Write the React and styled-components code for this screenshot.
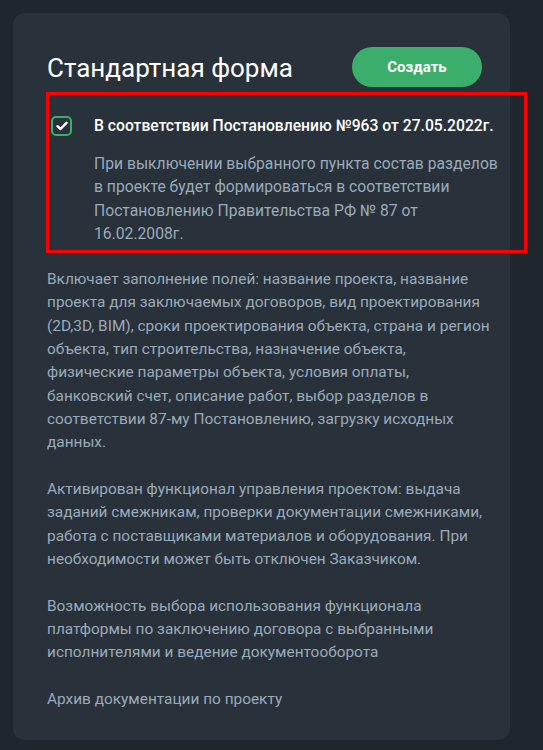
import styled, { createGlobalStyle } from 'styled-components';

const GlobalStyle = createGlobalStyle`
  html, body {
    margin: 0;
    padding: 0;
    background: #1f262d;
  }
  body {
    font-family: Roboto, "Noto Sans", "Liberation Sans", sans-serif;
  }
`;

// строки абзацев разбиты так же, как в макете
const paragraphs = [
  [
    'Включает заполнение полей: название проекта, название',
    'проекта для заключаемых договоров, вид проектирования',
    '(2D,3D, BIM), сроки проектирования объекта, страна и регион',
    'объекта, тип строительства, назначение объекта,',
    'физические параметры объекта, условия оплаты,',
    'банковский счет, описание работ, выбор разделов в',
    'соответствии 87-му Постановлению, загрузку исходных',
    'данных.',
  ],
  [
    'Активирован функционал управления проектом: выдача',
    'заданий смежникам, проверки документации смежниками,',
    'работа с поставщиками материалов и оборудования. При',
    'необходимости может быть отключен Заказчиком.',
  ],
  [
    'Возможность выбора использования функционала',
    'платформы по заключению договора с выбранными',
    'исполнителями и ведение документооборота',
  ],
  ['Архив документации по проекту'],
];

const App = () => {
  return (
    <Page>
      <GlobalStyle />
      <Card>
        <Header>
          <Title>Стандартная форма</Title>
          <CreateButton>Создать</CreateButton>
        </Header>

        {/* выделенный блок с чекбоксом */}
        <Highlight>
          <Checkbox>
            <svg width="12" height="10" viewBox="0 0 12 10">
              <path d="M1.5 5.2 L4.5 8 L10.5 1.8" fill="none" stroke="#fff" strokeWidth="2.4" strokeLinecap="round" strokeLinejoin="round" />
            </svg>
          </Checkbox>
          <OptionBody>
            <OptionTitle>В соответствии Постановлению №963 от 27.05.2022г.</OptionTitle>
            <OptionNote>
              При выключении выбранного пункта состав разделов в проекте будет формироваться в соответствии Постановлению Правительства РФ № 87 от 16.02.2008г.
            </OptionNote>
          </OptionBody>
        </Highlight>

        <Description>
          {paragraphs.map((lines, i) => (
            <Paragraph key={i}>
              {lines.map((line, j) => (
                <Line key={j}>{line}</Line>
              ))}
            </Paragraph>
          ))}
        </Description>
      </Card>
    </Page>
  );
};

export default App;

const Page = styled.div`
  padding: 13px 33px 8px 13px;
`;

const Card = styled.div`
  background: #29313b;
  border-radius: 12px;
  padding: 34px 8px 29px 34px;
`;

const Header = styled.div`
  display: flex;
  justify-content: space-between;
  align-items: center;
  height: 40px;
  padding-right: 20px;
`;

const Title = styled.h2`
  margin: 0;
  font-size: 26px;
  font-weight: 400;
  color: #ffffff;
  padding-top: 2px;
`;

const CreateButton = styled.button`
  width: 130px;
  height: 40px;
  border: none;
  border-radius: 20px;
  background: #3aae6a;
  color: #ffffff;
  font-family: inherit;
  font-size: 15px;
  font-weight: 700;
  cursor: pointer;
`;

const Highlight = styled.div`
  display: grid;
  grid-template-columns: 21px 1fr;
  column-gap: 22px;
  margin: 5px -25px 15px -1px;
  padding: 19px 10px 5px 2px;
  border: 3px solid #ff0000;
`;

const Checkbox = styled.div`
  width: 21px;
  height: 20px;
  box-sizing: border-box;
  margin-top: 2px;
  border: 2px solid #3aae6a;
  border-radius: 5px;
  display: flex;
  align-items: center;
  justify-content: center;
`;

const OptionBody = styled.div`
  display: flex;
  flex-direction: column;
  gap: 15px;
`;

const OptionTitle = styled.div`
  font-size: 15.7px;
  font-weight: 500;
  line-height: 23px;
  color: #ffffff;
`;

const OptionNote = styled.p`
  margin: 0;
  font-size: 15.7px;
  line-height: 23.3px;
  color: #9aabba;
  max-width: 408px;
`;

const Description = styled.div`
  display: flex;
  flex-direction: column;
  gap: 23.5px;
`;

const Paragraph = styled.p`
  margin: 0;
  font-size: 15.4px;
  line-height: 23.3px;
  color: #9aabba;
`;

const Line = styled.span`
  display: block;
  white-space: nowrap;
`;
